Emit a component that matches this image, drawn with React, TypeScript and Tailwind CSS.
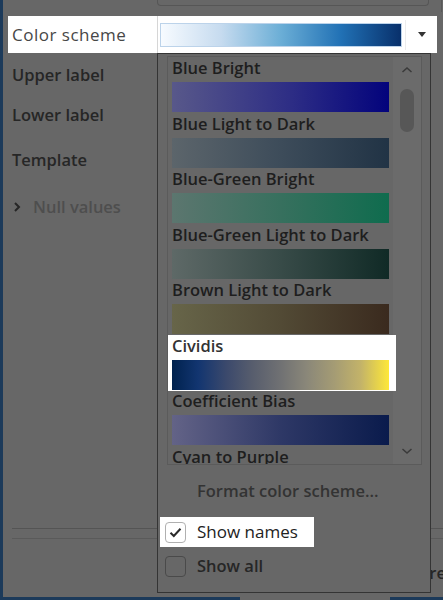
import React from "react";

const items: { name: string; grad: string; hl?: boolean }[] = [
  { name: "Blue Bright", grad: "bg-[linear-gradient(to_right,#58588a,#2d2d85_55%,#03037c)]" },
  { name: "Blue Light to Dark", grad: "bg-[linear-gradient(to_right,#5c656b,#3d4c5a_50%,#213345)]" },
  { name: "Blue-Green Bright", grad: "bg-[linear-gradient(to_right,#5c766f,#37705e_50%,#0f6c4e)]" },
  { name: "Blue-Green Light to Dark", grad: "bg-[linear-gradient(to_right,#5e6967,#384b48_50%,#102a26)]" },
  { name: "Brown Light to Dark", grad: "bg-[linear-gradient(to_right,#676549,#524a35_50%,#3a2a1e)]" },
  { name: "Cividis", grad: "bg-[linear-gradient(to_right,#00224e,#123570_12%,#3b496c_25%,#575d6d_37%,#707173_50%,#8a8779_62%,#a59c74_75%,#c3b369_87%,#fee838)]", hl: true },
  { name: "Coefficient Bias", grad: "bg-[linear-gradient(to_right,#636387,#2e3866_50%,#0a1b4c)]" },
  { name: "Cyan to Purple", grad: "bg-[linear-gradient(to_right,#587680,#3a3a78)]" },
];

function Chevron({ down }: { down?: boolean }) {
  return (
    <svg width="12" height="8" viewBox="0 0 12 8" className="block">
      <path
        d={down ? "M1.5 2 L6 6 L10.5 2" : "M1.5 6 L6 2 L10.5 6"}
        fill="none"
        stroke="#3a3a3a"
        strokeWidth="1.5"
      />
    </svg>
  );
}

export default function App() {
  return (
    <div
      className="relative w-[443px] h-[600px] overflow-hidden bg-[#676767] border-l-[3px] border-[#1c3a5a] flex flex-col"
      style={{ fontFamily: '"Open Sans", "Noto Sans", sans-serif' }}
    >
      {/* top textbox remnant */}
      <div className="flex h-[16px]">
        <div className="ml-[154px] w-[272px] h-[6px] border-x border-b border-[#565656] rounded-b-[4px]" />
        <div className="ml-[12px] w-px h-[12px] bg-[#585858]" />
      </div>

      {/* Color scheme row (highlighted) */}
      <div className="ml-[5px] w-[429px] h-[37px] bg-white flex items-center">
        <div className="w-[149px] pl-[4px] text-[17px] tracking-[0.5px] leading-[24px] text-[#474747] font-medium">Color scheme</div>
        <div className="h-full w-px bg-[#d6d6d6]" />
        <div className="ml-[2px] w-[242px] h-[24px] border border-[#bcd3ea] bg-[linear-gradient(to_right,#f7fbff,#c6dbef_25%,#6baed6_50%,#2171b5_75%,#08306b)]" />
        <div className="ml-[3px] h-[30px] w-px bg-[#ececec]" />
        <div className="flex-1 flex items-center justify-center">
          <svg width="8" height="5" viewBox="0 0 8 5">
            <path d="M0 0 L8 0 L4 5 Z" fill="#333" />
          </svg>
        </div>
      </div>

      {/* left labels */}
      <div className="pl-[9px] text-[16.5px] leading-[24px] text-[#262626] font-semibold">
        <div className="mt-[10px]">Upper label</div>
        <div className="mt-[16px]">Lower label</div>
        <div className="mt-[21px]">Template</div>
        <div className="mt-[23px] flex items-center">
          <svg width="8" height="12" viewBox="0 0 8 12" className="ml-[1px]">
            <path d="M2 2 L6 6 L2 10" fill="none" stroke="#262626" strokeWidth="2" />
          </svg>
          <span className="ml-[12px] text-[#4e4e4e]">Null values</span>
        </div>
      </div>

      {/* separator lines */}
      <div className="mt-[309px] ml-[9px] h-px bg-[#545454]" />
      <div className="mt-[9px] ml-[9px] h-px bg-[#5a5a5a]" />

      <div className="mt-[22px] flex justify-end mr-[-3px] text-[16.5px] leading-[24px] text-[#262626] font-semibold">Restore</div>

      {/* bottom blue strip */}
      <div className="mt-auto flex h-[3px]">
        <div className="w-[237px] bg-[#1c3a5a]" />
        <div className="w-[150px]" />
        <div className="flex-1 bg-[#1c3a5a]" />
      </div>

      {/* dropdown popup */}
      <div className="absolute left-[154px] top-[53px] w-[274px] h-[540px] border border-[#343434] bg-[#676767] flex flex-col">
        <div className="mt-[2px] ml-[9px] w-[255px] h-[409px] border border-[#5b5b5b] flex overflow-hidden">
          <div className="w-[225px] shrink-0 pt-[1px]">
            {items.map((it) => (
              <div
                key={it.name}
                className={
                  it.hl
                    ? "relative z-10 -mt-[1px] pt-[1px] w-[228px] bg-white px-[4px] pb-[1px]"
                    : "px-[4px] pb-[1.6px]"
                }
              >
                <div
                  className={
                    "text-[16.5px] leading-[20px] whitespace-nowrap font-semibold " +
                    (it.hl ? "text-[#333]" : "text-[#1e1e1e]")
                  }
                >
                  {it.name}
                </div>
                <div className={"mt-[4px] h-[30px] w-[217px] " + it.grad} />
              </div>
            ))}
          </div>
          <div className="flex-1 bg-[#6b6b6b] flex flex-col items-center">
            <div className="mt-[9px]">
              <Chevron />
            </div>
            <div className="mt-[15px] w-[14px] h-[43px] rounded-full bg-[#575757]" />
            <div className="mt-auto mb-[9px]">
              <Chevron down />
            </div>
          </div>
        </div>

        <div className="mt-[14px] pl-[39px] text-[16.5px] leading-[24px] text-[#333] font-semibold">Format color scheme...</div>

        <div className="mt-[14px] ml-[2px] w-[154px] h-[30px] bg-white flex items-center pl-[5px]">
          <div className="w-[21px] h-[21px] rounded-[4px] border border-[#b0b0b0] flex items-center justify-center">
            <svg width="13" height="11" viewBox="0 0 13 11">
              <path d="M1.5 5.8 L4.8 9 L11.5 1.8" fill="none" stroke="#2a2a2a" strokeWidth="2" />
            </svg>
          </div>
          <span className="ml-[11px] text-[17px] leading-[24px] text-[#222] font-medium">Show names</span>
        </div>

        <div className="mt-[4px] ml-[2px] h-[30px] flex items-center pl-[5px]">
          <div className="w-[21px] h-[21px] rounded-[4px] border border-[#4a4a4a]" />
          <span className="ml-[11px] text-[16.5px] leading-[24px] text-[#262626] font-semibold">Show all</span>
        </div>
      </div>
    </div>
  );
}
